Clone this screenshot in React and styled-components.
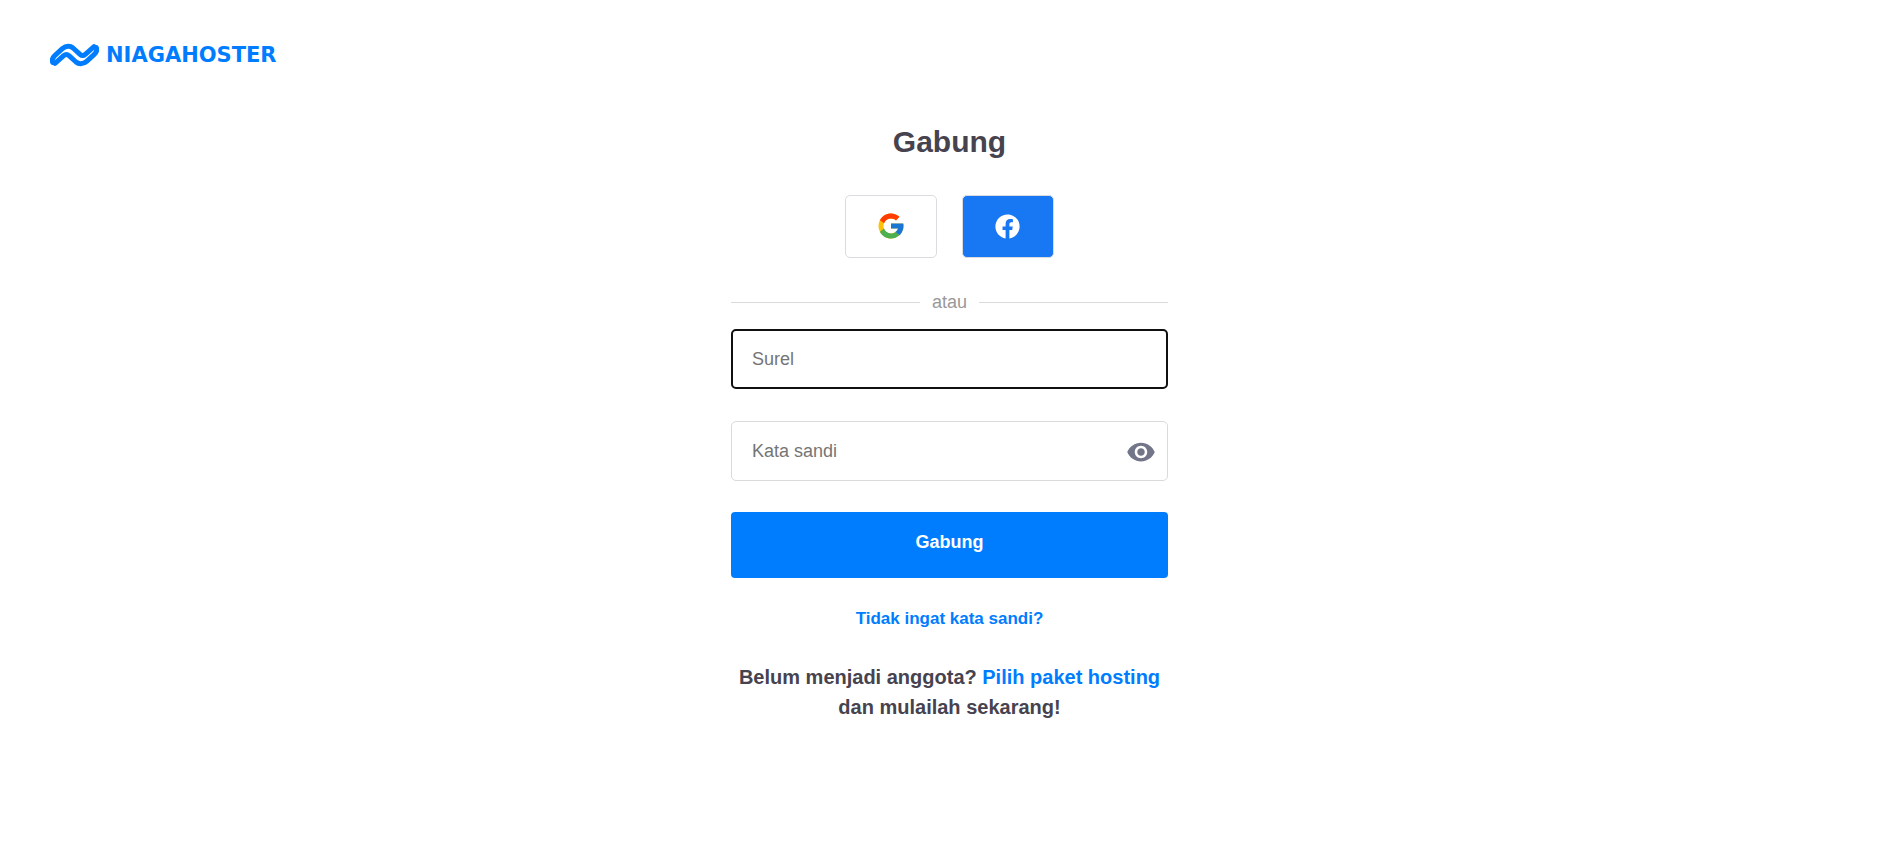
import React, { useState } from "react";
import styled, { createGlobalStyle } from "styled-components";
import { FcGoogle } from "react-icons/fc";
import { FaFacebook } from "react-icons/fa";
import { MdVisibility, MdVisibilityOff } from "react-icons/md";

const GlobalStyle = createGlobalStyle`
  *, *::before, *::after { box-sizing: border-box; }
  body {
    margin: 0;
    background: #fff;
    color: #46434f;
    font-family: "Liberation Sans", Arial, sans-serif;
    font-size: 18px;
  }
`;

const Header = styled.header`
  display: flex;
  padding: 40px 50px 0;
`;

const Brand = styled.a`
  display: flex;
  align-items: center;
  gap: 7px;
  height: 30px;
  color: #007dff;
  text-decoration: none;
`;

const BrandMark = styled.svg`
  width: 49px;
  height: 24px;
`;

const BrandName = styled.span`
  font-family: "DejaVu Sans", Inter, sans-serif;
  font-size: 21px;
  font-weight: 700;
  line-height: 30px;
`;

const Main = styled.main`
  display: flex;
  justify-content: center;
  padding: 53px 0 40px 4px;
`;

const Panel = styled.section`
  display: flex;
  flex-direction: column;
  align-items: center;
  width: 100%;
  max-width: 437px;
`;

const Title = styled.h1`
  margin: 0 0 34px;
  font-size: 30px;
  line-height: 38px;
`;

const SocialRow = styled.div`
  display: flex;
  gap: 25px;
`;

const SocialButton = styled.button`
  display: flex;
  align-items: center;
  justify-content: center;
  width: 92px;
  height: 63px;
  padding: 0 1px 1px 0;
  border: 1px solid #dadce0;
  border-radius: 5px;
  background: ${(p) => p.$background};
  color: #fff;
  cursor: pointer;
`;

const Divider = styled.div`
  display: flex;
  align-items: center;
  align-self: stretch;
  gap: 12px;
  margin: 32px 0 14px;
  color: #999;
  line-height: 25px;

  &::before,
  &::after {
    content: "";
    flex: 1;
    height: 1px;
    background: #dadada;
  }
`;

const Form = styled.form`
  display: flex;
  flex-direction: column;
  align-self: stretch;
`;

const Fields = styled.div`
  display: flex;
  flex-direction: column;
  gap: 32px;
  margin-bottom: 31px;
`;

const Field = styled.div`
  display: flex;
  align-items: center;
  height: 60px;
  padding: 0 11px 0 20px;
  border: 1px solid #dadada;
  border-radius: 5px;
  outline: ${(p) => (p.$active ? "2px solid #101010" : "none")};
  outline-offset: -2px;
`;

const Input = styled.input`
  flex: 1;
  min-width: 0;
  padding: 0;
  border: 0;
  outline: 0;
  background: none;
  color: inherit;
  font: inherit;
  line-height: 24px;

  &::placeholder {
    color: #757575;
    opacity: 1;
  }
`;

const RevealButton = styled.button`
  display: flex;
  padding: 2px 0 0;
  border: 0;
  background: none;
  color: #737589;
  cursor: pointer;
`;

const SubmitButton = styled.button`
  height: 66px;
  padding: 0 0 6px;
  border: 0;
  border-radius: 4px;
  background: #007dff;
  color: #fff;
  font: inherit;
  font-weight: 700;
  cursor: pointer;
`;

const TextLink = styled.a`
  color: #007dff;
  font-weight: 700;
  text-decoration: none;
`;

const ForgotLink = styled(TextLink)`
  margin-top: 28px;
  font-size: 17px;
  line-height: 25px;
`;

const JoinText = styled.p`
  margin: 31px 0 0;
  font-size: 20px;
  font-weight: 700;
  line-height: 30px;
  text-align: center;
`;

const RIBBON = "M8 56 Q4 45 15 35 L37 15 Q45 8 55 8 Q63 8 69 13 L90 32 Q98 39 106 32 L132 9";

function NiagahosterMark() {
  return (
    <BrandMark viewBox="0 -1 147 70" fill="none" aria-hidden="true">
      <g stroke="#007dff" strokeWidth="15" strokeLinecap="round" strokeLinejoin="round">
        <path d={RIBBON} />
        <path d={RIBBON} transform="rotate(180 73.5 34)" />
      </g>
    </BrandMark>
  );
}

export default function App() {
  const [visible, setVisible] = useState(false);
  const RevealIcon = visible ? MdVisibilityOff : MdVisibility;

  return (
    <>
      <GlobalStyle />
      <Header>
        <Brand href="#">
          <NiagahosterMark />
          <BrandName>NIAGAHOSTER</BrandName>
        </Brand>
      </Header>
      <Main>
        <Panel>
          <Title>Gabung</Title>
          <SocialRow>
            <SocialButton type="button" aria-label="Google" $background="#fff">
              <FcGoogle size={30} />
            </SocialButton>
            <SocialButton type="button" aria-label="Facebook" $background="#1877f2">
              <FaFacebook size={25} />
            </SocialButton>
          </SocialRow>
          <Divider>atau</Divider>
          <Form onSubmit={(e) => e.preventDefault()}>
            <Fields>
              <Field $active>
                <Input type="email" placeholder="Surel" aria-label="Surel" />
              </Field>
              <Field>
                <Input
                  type={visible ? "text" : "password"}
                  placeholder="Kata sandi"
                  aria-label="Kata sandi"
                />
                <RevealButton
                  type="button"
                  aria-label="Tampilkan kata sandi"
                  onClick={() => setVisible(!visible)}
                >
                  <RevealIcon size={30} />
                </RevealButton>
              </Field>
            </Fields>
            <SubmitButton type="submit">Gabung</SubmitButton>
          </Form>
          <ForgotLink href="#">Tidak ingat kata sandi?</ForgotLink>
          <JoinText>
            Belum menjadi anggota? <TextLink href="#">Pilih paket hosting</TextLink> dan mulailah
            sekarang!
          </JoinText>
        </Panel>
      </Main>
    </>
  );
}
